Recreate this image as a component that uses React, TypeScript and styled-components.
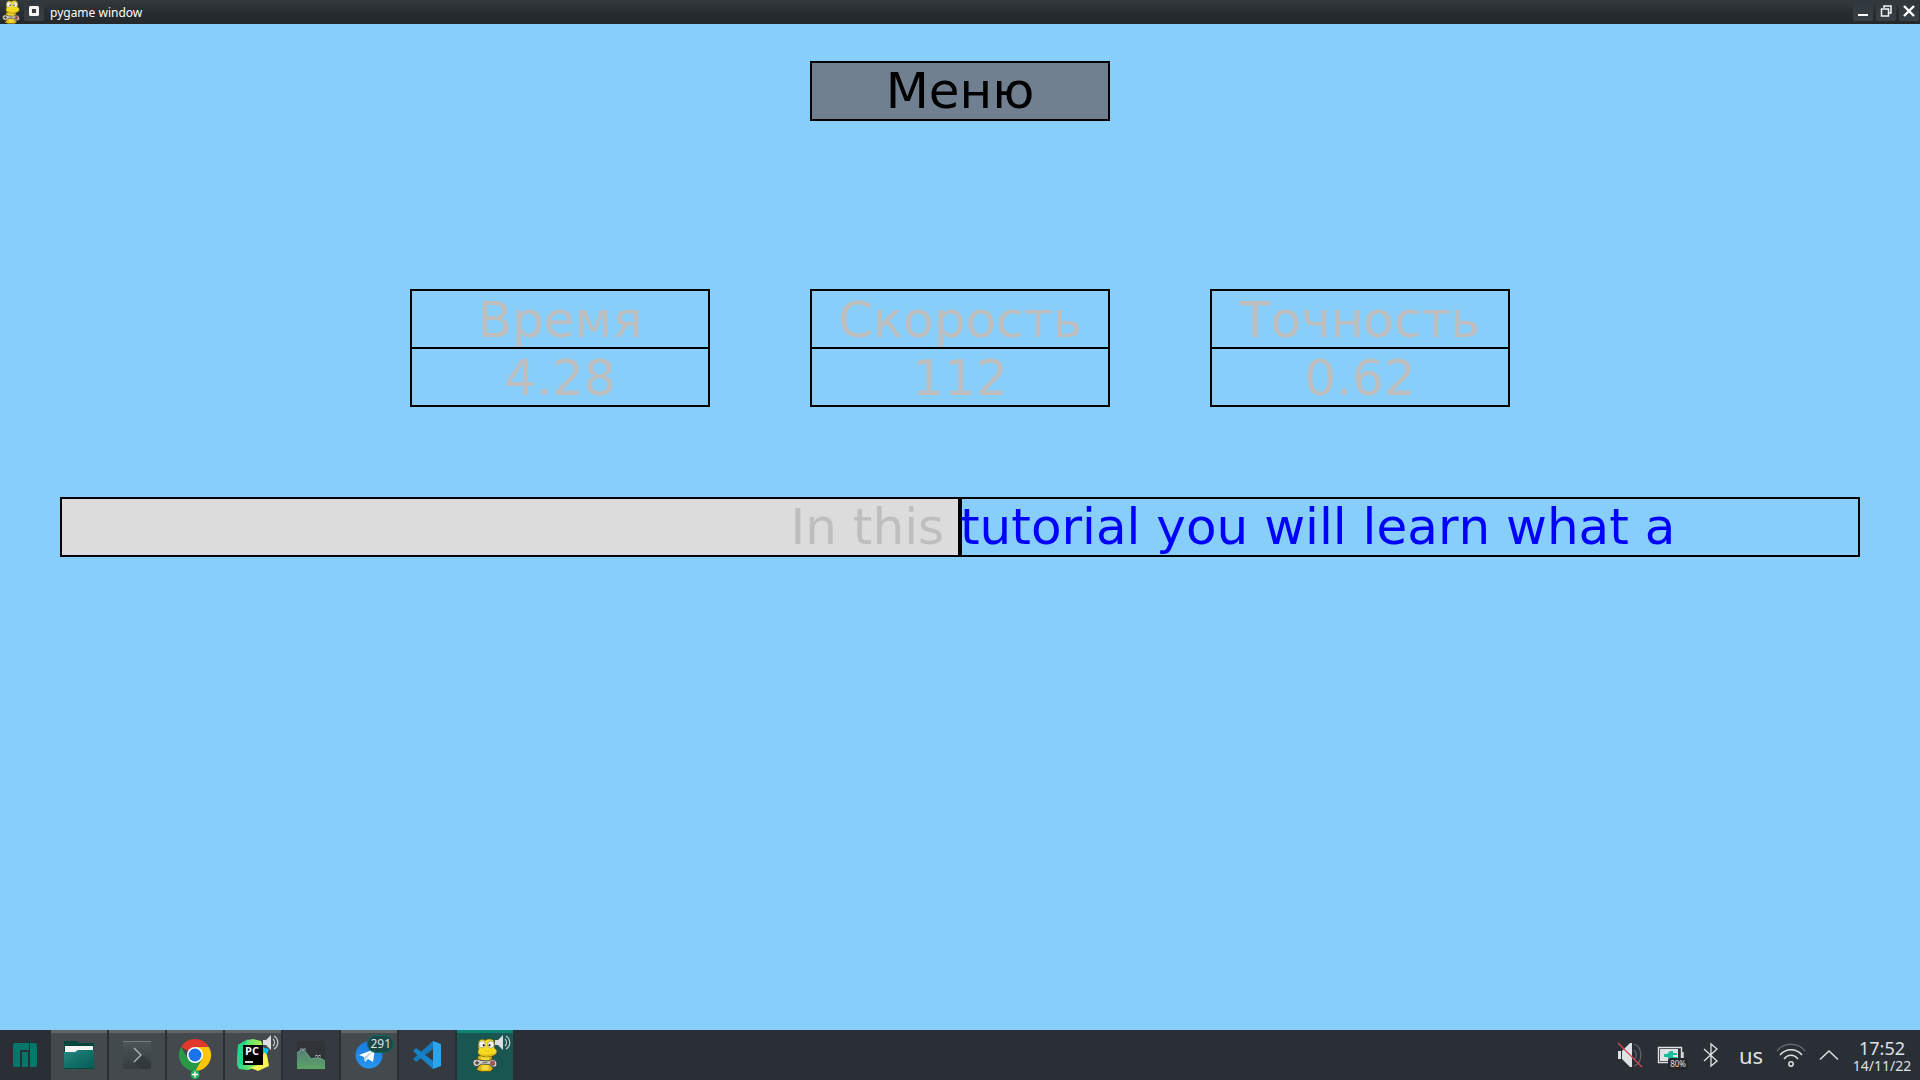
import React from "react";
import styled, { createGlobalStyle } from "styled-components";

const Global = createGlobalStyle`
  *, *::before, *::after { box-sizing: border-box; }
  html, body, #root { height: 100%; }
  body { margin: 0; overflow: hidden; background: #87cefa; font-family: "Noto Sans", sans-serif; }
  button { font: inherit; color: inherit; border: 0; padding: 0; margin: 0; background: none; cursor: pointer; }
  svg { display: block; overflow: visible; }
`;

const Desktop = styled.div`
  display: flex;
  flex-direction: column;
  min-height: 100vh;
`;

const TitleBar = styled.header`
  display: flex;
  align-items: center;
  gap: 3px;
  height: 24px;
  padding: 0 1px;
  color: #fcfcfc;
  background: linear-gradient(#33393d, #272c30 55%, #24282b);
`;

const WindowTitle = styled.h1`
  flex: 1;
  margin: 0 0 0 3px;
  padding-top: 1px;
  font-size: 12px;
  font-weight: 400;
  line-height: 24px;
`;

const WindowButtons = styled.div`
  display: flex;
  gap: 3px;
`;

const WindowButton = styled.button`
  display: grid;
  place-items: center;
  width: 20px;
  height: 20px;
  margin-bottom: 2px;
  border-radius: 2px;
  background: linear-gradient(#30373c, #3a4146);
`;

const Game = styled.main`
  flex: 1;
  display: flex;
  flex-direction: column;
  align-items: center;
  padding: 37px 60px 0;
  background: #87cefa;
  font-family: "DejaVu Sans", sans-serif;
  font-size: 50px;
  font-kerning: none;
  line-height: 58px;
`;

const MenuButton = styled.button`
  width: 300px;
  height: 60px;
  border: 2px solid #000;
  padding-top: 1px;
  background: #708090;
  color: #000;
  line-height: 55px;
`;

const Stats = styled.dl`
  display: flex;
  gap: 100px;
  margin: 168px 0 0;
`;

const Stat = styled.div`
  width: 300px;
  border: 2px solid #000;
  color: #bebebe;
  text-align: center;
`;

const StatName = styled.dt`
  height: 58px;
  border-bottom: 2px solid #000;
`;

const StatValue = styled.dd`
  height: 56px;
  margin: 0;
`;

const TypingLine = styled.div`
  display: flex;
  align-self: stretch;
  margin-top: 90px;
`;

const TypingHalf = styled.div<{ $typed?: boolean }>`
  flex: 1 1 0;
  height: 60px;
  box-shadow: inset 0 0 0 2px #000;
  line-height: 60px;
  white-space: pre;
  overflow: hidden;
  text-align: ${(p) => (p.$typed ? "right" : "left")};
  color: ${(p) => (p.$typed ? "#bebebe" : "#0000ff")};
  background: ${(p) => (p.$typed ? "#dcdcdc" : "transparent")};
`;

const Panel = styled.footer`
  display: flex;
  align-items: stretch;
  height: 50px;
  background: #2a2e35;
  color: #dfe2e4;
`;

const Launcher = styled.button`
  display: grid;
  place-items: center;
  width: 50px;
  margin-right: 1px;
`;

const Tasks = styled.nav`
  display: flex;
  flex: 1;
  gap: 2px;
`;

const tones = {
  open: ["#44494d", "#616568"],
  pinned: ["#353a40", "#353a40"],
  active: ["#1a5651", "#0d8474"],
};

const Task = styled.button<{ $tone: keyof typeof tones }>`
  position: relative;
  display: grid;
  place-items: center;
  width: 56px;
  padding-bottom: 3px;
  border-top: 3px solid ${(p) => tones[p.$tone][1]};
  background: ${(p) => tones[p.$tone][0]};
`;

const Speaker = styled.span`
  position: absolute;
  top: 1px;
  right: 2px;
`;

const Count = styled.span`
  position: absolute;
  top: 2px;
  right: 3px;
  height: 18px;
  padding: 0 2px;
  border: 1px solid #0e6a5c;
  border-radius: 9px;
  background: #1c4744;
  font-size: 12px;
  line-height: 16px;
`;

const Tray = styled.div`
  display: flex;
  align-items: center;
`;

const TrayButton = styled.button<{ $width: number }>`
  display: grid;
  place-items: center;
  width: ${(p) => p.$width}px;
  height: 50px;
  font-size: 22px;
`;

const Battery = styled.span`
  position: relative;
`;

const Charge = styled.span`
  position: absolute;
  right: -4px;
  bottom: -7px;
  padding: 0 2px;
  border-radius: 2px;
  background: #24282c;
  font-size: 8px;
  line-height: 12px;
`;

const Clock = styled.time`
  display: flex;
  flex-direction: column;
  align-items: center;
  width: 72px;
  padding: 1px 4px 0 0;
  font-size: 14px;
  line-height: 16px;
`;

const Hours = styled.span`
  font-size: 18px;
  line-height: 20px;
`;

const Snake = ({ width, height }: { width: number; height: number }) => (
  <svg width={width} height={height} viewBox="45 28 80 104" aria-hidden="true">
    <path d="M64 82l-4 16 4 18-5 10 14 5h28l9-8-5-10 2-33z" fill="#d9b31a" stroke="#4d430c" strokeWidth="2" />
    <path d="M72 84h26l-2 42-20 1z" fill="#f3d836" />
    <path d="M65 44c0-12 12-16 21-9 8-7 24-6 27 4 3 8 0 13 1 20 8 3 10 12 4 18-9 10-40 12-51 2-7-7-3-13-1-18-3-5-2-11-1-17z" fill="#f7dc22" stroke="#5c5110" strokeWidth="2" />
    <path d="M68 74c12 7 34 6 48-2-6 14-36 19-48 2z" fill="#dfbb14" />
    <ellipse cx="76" cy="47" rx="10" ry="11" fill="#f5f4ec" stroke="#77735d" strokeWidth="1.500" />
    <ellipse cx="103" cy="48" rx="10" ry="11" fill="#f5f4ec" stroke="#77735d" strokeWidth="1.500" />
    <circle cx="81" cy="50" r="3" />
    <circle cx="99" cy="50" r="3" />
    <path d="M88 69h2M95 70h2M104 68h2" stroke="#8b7512" strokeWidth="2" />
    <path d="M52 95c7-4 14-1 21 2l23 1c7-4 16-6 22 0 6 7 4 18-3 19-8 2-12-5-17-8l-23-1c-6 3-12 9-19 7-8-2-11-15-4-20z" fill="#d5d1c8" stroke="#302d29" strokeWidth="2.500" />
    <path d="M54 104h13M60.500 98v12" stroke="#3c3a38" strokeWidth="4" />
    <path d="M78 103h14" stroke="#77736e" strokeWidth="3" />
    <circle cx="108" cy="105" r="8" fill="#77716f" />
    <circle cx="104" cy="105" r="2.500" fill="#df3d44" />
    <circle cx="112" cy="104" r="2.500" fill="#df3d44" />
    <circle cx="108" cy="100" r="2.500" fill="#df3d44" />
    <circle cx="109" cy="109" r="2.500" fill="#b5222d" />
  </svg>
);

const Volume = () => (
  <Speaker>
    <svg width="16" height="18" viewBox="0 0 16 18" aria-hidden="true">
      <path d="M0 6h3l5-5v15l-5-5H0z" fill="#dedede" />
      <path d="M10 5c2 2 2 5 0 7M11 2c5 3 5 10 0 13" fill="none" stroke="#c9cccd" strokeWidth="1.200" />
    </svg>
  </Speaker>
);

const ManjaroIcon = () => (
  <svg width="24" height="24" viewBox="0 0 24 24" fill="#06766a" aria-hidden="true">
    <path d="M2 0h14v7H7v17H2a2 2 0 0 1-2-2V2a2 2 0 0 1 2-2zM9 9h6v15H9zM17 0h5a2 2 0 0 1 2 2v20a2 2 0 0 1-2 2h-5z" />
  </svg>
);

const FolderIcon = () => (
  <svg width="30" height="28" viewBox="0 0 30 28" aria-hidden="true">
    <defs>
      <linearGradient id="folder" x1="0" y1="0" x2="1" y2="1">
        <stop offset="0" stopColor="#2c8c86" />
        <stop offset=".4" stopColor="#16746d" />
        <stop offset="1" stopColor="#045e56" />
      </linearGradient>
    </defs>
    <path d="M0 0h13l2 2h15v12H0z" fill="#02473e" />
    <path d="M1 5h28v8H1z" fill="#f5f5f3" />
    <path d="M0 11h11l3-2h16v18H0z" fill="url(#folder)" />
    <path d="M0 27h30v1H0z" fill="#05453f" />
  </svg>
);

const TerminalIcon = () => (
  <svg width="28" height="28" viewBox="0 0 28 28" aria-hidden="true">
    <defs>
      <linearGradient id="terminal" x1="0" y1="0" x2="0" y2="1">
        <stop offset="0" stopColor="#4c5557" />
        <stop offset="1" stopColor="#343c3f" />
      </linearGradient>
    </defs>
    <path d="M0 0h28v28H0z" fill="url(#terminal)" />
    <path d="M12 7l16 15v6H18l-7-7 6-7z" fill="#2b3235" opacity=".5" />
    <path d="M0 .5h28" stroke="#747b7d" />
    <path d="M11 7l7 7-7 7" fill="none" stroke="#b3b7b8" strokeWidth="1.400" />
  </svg>
);

const ChromeIcon = () => (
  <svg width="32" height="32" viewBox="1 0 32 32" aria-hidden="true">
    <path d="M17 16L3.100 8A16 16 0 0 1 30.900 8H17z" fill="#e2372b" />
    <path d="M30.900 8A16 16 0 0 1 17 32l7-12L17 8z" fill="#fdc60b" />
    <path d="M3.100 8A16 16 0 0 0 17 32l7-12-14 0z" fill="#2a9947" />
    <circle cx="17" cy="16" r="8" fill="#fff" />
    <circle cx="17" cy="16" r="6.500" fill="#1a73e8" />
    <circle cx="17" cy="35.500" r="4.500" fill="#27ae60" />
    <path d="M14 35.500h6M17 32.500v6" stroke="#fff" strokeWidth="1.300" />
  </svg>
);

const PyCharmIcon = () => (
  <svg width="32" height="32" viewBox="0 0 32 32" aria-hidden="true">
    <defs>
      <linearGradient id="pycharm" x1="0" y1="0" x2="1" y2="0">
        <stop offset="0" stopColor="#21d789" />
        <stop offset="1" stopColor="#b9f14b" />
      </linearGradient>
    </defs>
    <path d="M1 6L10 1l6-1 8 2 3 8-4 17-12 4-9-1-2-4z" fill="url(#pycharm)" />
    <path d="M1 6L11 0l-5 9v17l-6-1z" fill="#21d789" />
    <path d="M24 8l8 2-3 7-5 1z" fill="#07c3f2" />
    <path d="M10 30l14-5 3-12 3 3 2 11-11 5-7-3z" fill="#f4f352" />
    <path d="M6 6h20v20H6z" fill="#000" />
    <path d="M8 22h8v2H8z" fill="#ddd" />
    <text x="8" y="16" fill="#fff" fontFamily="Open Sans, sans-serif" fontWeight="700" fontSize="11">PC</text>
  </svg>
);

const MonitorIcon = () => (
  <svg width="28" height="28" viewBox="0 0 28 28" aria-hidden="true">
    <defs>
      <linearGradient id="graph" x1="0" y1="0" x2="0" y2="1">
        <stop offset="0" stopColor="#557e79" />
        <stop offset="1" stopColor="#5aa565" />
      </linearGradient>
    </defs>
    <path d="M0 0h28v28H0z" fill="#303438" />
    <path d="M0 12l4-3h3l7 9 5-1h4l5 3v8H0z" fill="url(#graph)" />
    <path d="M0 12l4-3h3l7 9 5-1h4l5 3" fill="none" stroke="#78a894" />
    <path d="M3.500 8.500h2M6.500 8.500h2M18.500 15h2M21.500 15h2" stroke="#b9c4c1" strokeWidth="2" />
    <path d="M4 9h1M7 9h1M19 15.500h1M22 15.500h1" stroke="#202526" />
  </svg>
);

const TelegramIcon = () => (
  <svg width="28" height="28" viewBox="0 0 28 28" aria-hidden="true">
    <defs>
      <linearGradient id="telegram" x1="0" y1="0" x2="0" y2="1">
        <stop offset="0" stopColor="#1b78e0" />
        <stop offset="1" stopColor="#2597ee" />
      </linearGradient>
    </defs>
    <circle cx="14" cy="14" r="13.500" fill="url(#telegram)" />
    <path d="M4 14l16-6-2 13-5-3-3 3-1-5z" fill="#fff" />
    <path d="M9 16l9-6-6 7-2 4z" fill="#bcd3e4" />
  </svg>
);

const CodeIcon = () => (
  <svg width="28" height="28" viewBox="0 0 28 28" aria-hidden="true">
    <path d="M20 0v8L3 21l-3-3L20 0z" fill="#1579bd" />
    <path d="M0 10l3-3 17 13v8z" fill="#1684cb" />
    <path d="M20 0l8 3v22l-8 3z" fill="#2ba4ed" />
  </svg>
);

const tasks: { name: string; tone: keyof typeof tones; icon: React.ReactNode; sound?: boolean; count?: number }[] = [
  { name: "Files", tone: "open", icon: <FolderIcon /> },
  { name: "Terminal", tone: "open", icon: <TerminalIcon /> },
  { name: "Chrome", tone: "open", icon: <ChromeIcon /> },
  { name: "PyCharm", tone: "open", icon: <PyCharmIcon />, sound: true },
  { name: "System monitor", tone: "pinned", icon: <MonitorIcon /> },
  { name: "Telegram", tone: "open", icon: <TelegramIcon />, count: 291 },
  { name: "Code", tone: "pinned", icon: <CodeIcon /> },
  { name: "pygame", tone: "active", icon: <Snake width={26} height={34} />, sound: true },
];

const stats = [
  ["Время", "4.28"],
  ["Скорость", "112"],
  ["Точность", "0.62"],
];

export default function App() {
  return (
    <Desktop>
      <Global />
      <TitleBar>
        <Snake width={20} height={24} />
        <WindowButton aria-label="Pin">
          <svg width="12" height="12" viewBox="0 0 12 12" aria-hidden="true">
            <path d="M2 1h8l1 1v8l-1 1H2l-1-1V2zM4 4v4h4V4z" fill="#f4f4f4" fillRule="evenodd" />
          </svg>
        </WindowButton>
        <WindowTitle>pygame window</WindowTitle>
        <WindowButtons>
          <WindowButton aria-label="Minimize">
            <svg width="12" height="12" viewBox="0 0 12 12" aria-hidden="true">
              <path d="M1 10h10" stroke="#fff" strokeWidth="2" />
            </svg>
          </WindowButton>
          <WindowButton aria-label="Restore">
            <svg width="12" height="12" viewBox="0 0 12 12" fill="none" stroke="#f4f4f4" aria-hidden="true">
              <path d="M4 3V1h7v7H9" strokeWidth="1.500" />
              <path d="M1.500 4h7v7h-7z" strokeWidth="1.500" />
            </svg>
          </WindowButton>
          <WindowButton aria-label="Close">
            <svg width="12" height="12" viewBox="0 0 12 12" aria-hidden="true">
              <path d="M1 1l10 10M11 1L1 11" stroke="#fff" strokeWidth="2.400" />
            </svg>
          </WindowButton>
        </WindowButtons>
      </TitleBar>

      <Game>
        <MenuButton>Меню</MenuButton>
        <Stats>
          {stats.map(([name, value]) => (
            <Stat key={name}>
              <StatName>{name}</StatName>
              <StatValue>{value}</StatValue>
            </Stat>
          ))}
        </Stats>
        <TypingLine>
          <TypingHalf $typed>{"In this "}</TypingHalf>
          <TypingHalf>tutorial you will learn what a</TypingHalf>
        </TypingLine>
      </Game>

      <Panel>
        <Launcher aria-label="Applications">
          <ManjaroIcon />
        </Launcher>
        <Tasks>
          {tasks.map((t) => (
            <Task key={t.name} $tone={t.tone} aria-label={t.name}>
              {t.icon}
              {t.sound && <Volume />}
              {t.count && <Count>{t.count}</Count>}
            </Task>
          ))}
        </Tasks>
        <Tray>
          <TrayButton $width={40} aria-label="Muted">
            <svg width="26" height="26" viewBox="0 0 26 26" aria-hidden="true">
              <path d="M1 9h3v8H1zM5 9l8-8h2v24h-2l-8-8z" fill="#dfe2e4" />
              <path d="M17 8c3 3 3 7 0 10M17 2c9 3 9 19 0 22" fill="none" stroke="#62666b" strokeWidth="1.300" />
              <path d="M1 1l24 24" stroke="#da4453" strokeWidth="1.200" />
            </svg>
          </TrayButton>
          <TrayButton $width={42} aria-label="Battery">
            <Battery>
              <svg width="26" height="16" viewBox="0 0 26 16" aria-hidden="true">
                <path d="M.500.500h23v15H.500zM25 5v6" fill="none" stroke="#dfe2e4" strokeWidth="1.400" />
                <path d="M2 2h18v12H2z" fill="#dfe2e4" />
                <path d="M6 7h3l3-3h3v2h4v2h-4v2h4v2h-7L9 10H6z" fill="#1abc9c" />
              </svg>
              <Charge>80%</Charge>
            </Battery>
          </TrayButton>
          <TrayButton $width={38} aria-label="Bluetooth">
            <svg width="14" height="24" viewBox="0 0 14 24" fill="none" stroke="#dfe2e4" strokeWidth="1.300" aria-hidden="true">
              <path d="M0 6l13 12-6 5V1l6 5L0 18" />
            </svg>
          </TrayButton>
          <TrayButton $width={42}>us</TrayButton>
          <TrayButton $width={38} aria-label="Wi-Fi">
            <svg width="30" height="24" viewBox="0 0 30 24" fill="none" stroke="#dfe2e4" strokeWidth="1.500" aria-hidden="true">
              <path d="M1 8C8-1 22-1 29 8" stroke="#63676c" />
              <path d="M4 12c6-7 16-7 22 0M8 16c4-5 10-5 14 0" />
              <circle cx="15" cy="21" r="2.200" />
            </svg>
          </TrayButton>
          <TrayButton $width={38} aria-label="Show hidden icons">
            <svg width="18" height="10" viewBox="0 0 18 10" fill="none" stroke="#dfe2e4" strokeWidth="1.500" aria-hidden="true">
              <path d="M0 9.500L9 1l9 8.500" />
            </svg>
          </TrayButton>
          <Clock>
            <Hours>17:52</Hours>
            <span>14/11/22</span>
          </Clock>
        </Tray>
      </Panel>
    </Desktop>
  );
}
